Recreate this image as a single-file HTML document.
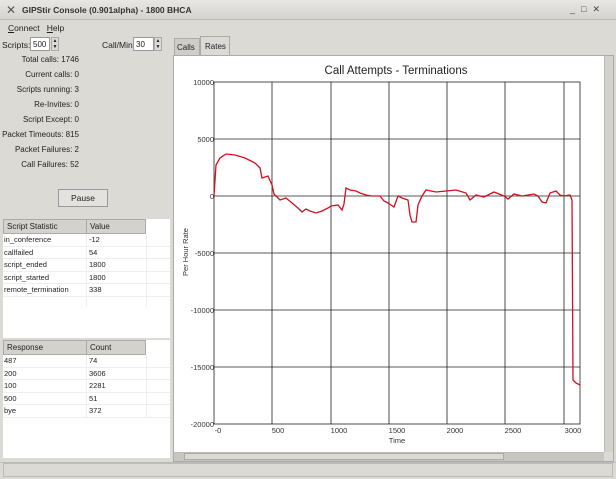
<!DOCTYPE html>
<html><head><style>
*{margin:0;padding:0;box-sizing:border-box}
body{width:616px;height:479px;background:#dcdad5;font-family:"Liberation Sans",sans-serif;font-size:8px;color:#222;position:relative;overflow:hidden}
.a{position:absolute}
.lbl{position:absolute;right:537px;text-align:right;white-space:nowrap;font-size:8px}
.spin{position:absolute;background:#fff;border:1px solid #999;height:14px;font-size:8px;padding:2px}
.tbl{position:absolute;background:#fff}
.hd{position:absolute;background:#d4d2cc;border:1px solid #aaa;height:15px;font-size:8px;padding:2px 3px}
.row{position:absolute;left:0;width:167px;height:12.5px;border-bottom:1px solid #eee;font-size:7.5px}
.row span{position:absolute;top:1px}
</style></head><body>
<div class="a" style="left:0;top:0;width:616px;height:20px;background:linear-gradient(#e8e7e3,#d6d4cf);border-bottom:1px solid #bbb"></div>
<div class="a" style="left:6px;top:3px;font-size:12px;color:#555">✕</div>
<div class="a" style="left:22px;top:5px;font-size:8.5px;font-weight:bold;color:#333">GIPStir Console (0.901alpha) - 1800 BHCA</div>
<div class="a" style="left:570px;top:4px;font-size:9px;color:#444;letter-spacing:6px">_□✕</div>
<div class="a" style="left:8px;top:23px;font-size:8.5px"><u>C</u>onnect&nbsp;&nbsp;&nbsp;<u>H</u>elp</div>
<div class="a" style="left:2px;top:40px;font-size:8.5px">Scripts:</div>
<div class="spin" style="left:30px;top:37px;width:20px">500</div>
<div class="a" style="left:51px;top:37px;width:8px;height:14px;border:1px solid #aaa;font-size:5px;line-height:6px;text-align:center">▲<br>▼</div>
<div class="a" style="left:102px;top:40px;font-size:8.5px">Call/Min:</div>
<div class="spin" style="left:133px;top:37px;width:21px">30</div>
<div class="a" style="left:154px;top:37px;width:8px;height:14px;border:1px solid #aaa;font-size:5px;line-height:6px;text-align:center">▲<br>▼</div>
<div class="lbl" style="top:55px">Total calls: 1746</div>
<div class="lbl" style="top:70px">Current calls: 0</div>
<div class="lbl" style="top:85px">Scripts running: 3</div>
<div class="lbl" style="top:100px">Re-Invites: 0</div>
<div class="lbl" style="top:115px">Script Except: 0</div>
<div class="lbl" style="top:130px">Packet Timeouts: 815</div>
<div class="lbl" style="top:145px">Packet Failures: 2</div>
<div class="lbl" style="top:160px">Call Failures: 52</div>
<div class="a" style="left:58px;top:189px;width:50px;height:18px;border:1px solid #999;background:#e4e2de;text-align:center;line-height:16px;font-size:8.5px">Pause</div>
<div class="tbl" style="left:3px;top:219px;width:167px;height:119px">
<div class="hd" style="left:0;top:0;width:84px">Script Statistic</div>
<div class="hd" style="left:83px;top:0;width:60px">Value</div>
<div class="a" style="left:83px;top:15px;width:1px;height:73px;background:#eee"></div>
<div class="a" style="left:143px;top:15px;width:1px;height:73px;background:#eee"></div>
<div class="row" style="top:15px"><span style="left:1px">in_conference</span><span style="left:86px">-12</span></div>
<div class="row" style="top:27.5px"><span style="left:1px">callfailed</span><span style="left:86px">54</span></div>
<div class="row" style="top:40px"><span style="left:1px">script_ended</span><span style="left:86px">1800</span></div>
<div class="row" style="top:52.5px"><span style="left:1px">script_started</span><span style="left:86px">1800</span></div>
<div class="row" style="top:65px"><span style="left:1px">remote_termination</span><span style="left:86px">338</span></div>
</div>
<div class="tbl" style="left:3px;top:340px;width:167px;height:118px">
<div class="hd" style="left:0;top:0;width:84px">Response</div>
<div class="hd" style="left:83px;top:0;width:60px">Count</div>
<div class="a" style="left:83px;top:15px;width:1px;height:63px;background:#eee"></div>
<div class="a" style="left:143px;top:15px;width:1px;height:63px;background:#eee"></div>
<div class="row" style="top:15px"><span style="left:1px">487</span><span style="left:86px">74</span></div>
<div class="row" style="top:27.5px"><span style="left:1px">200</span><span style="left:86px">3606</span></div>
<div class="row" style="top:40px"><span style="left:1px">100</span><span style="left:86px">2281</span></div>
<div class="row" style="top:52.5px"><span style="left:1px">500</span><span style="left:86px">51</span></div>
<div class="row" style="top:65px"><span style="left:1px">bye</span><span style="left:86px">372</span></div>
</div>
<div class="a" style="left:174px;top:38px;width:26px;height:18px;border:1px solid #aaa;background:#cfcdc8;font-size:8px;padding:4px 2px">Calls</div>
<div class="a" style="left:200px;top:36px;width:30px;height:20px;border:1px solid #aaa;border-bottom:none;background:#dcdad5;font-size:8px;padding:5px 4px">Rates</div>
<div class="a" style="left:173px;top:55px;width:441px;height:407px;border:1px solid #aaa;background:#dcdad5"></div>
<div class="a" style="left:174px;top:56px;width:430px;height:396px;background:#fff"></div>
<div class="a" style="left:604px;top:56px;width:9px;height:396px;background:#d4d2cc;border-left:1px solid #bbb"></div>
<div class="a" style="left:174px;top:452px;width:430px;height:9px;background:#c8c6c1;border-top:1px solid #bbb"></div>
<div class="a" style="left:184px;top:453px;width:320px;height:7px;background:#dcdad5;border:1px solid #aaa"></div>
<div class="a" style="left:0;top:462px;width:616px;height:17px;border-top:1px solid #bbb;background:#dcdad5"></div>
<div class="a" style="left:3px;top:463px;width:610px;height:14px;border:1px solid #bbb"></div>
<svg class="a" style="left:0;top:0" width="616" height="479" font-family="Liberation Sans,sans-serif">
<text x="396" y="74" font-size="11.5" text-anchor="middle" fill="#222">Call Attempts - Terminations</text>
<g stroke="#222" stroke-width="0.8" fill="none">
<rect x="214" y="82" width="366" height="342"/>
<path d="M272 82V424M331 82V424M389 82V424M447 82V424M505 82V424M564 82V424M214 139H580M214 196H580M214 253H580M214 310H580M214 367H580"/>
</g>
<g font-size="7.5" fill="#333" text-anchor="end">
<text x="214" y="85">10000</text><text x="214" y="142">5000</text><text x="214" y="199">0</text>
<text x="214" y="256">-5000</text><text x="214" y="313">-10000</text><text x="214" y="370">-15000</text><text x="214" y="427">-20000</text>
</g>
<g font-size="7.5" fill="#333" text-anchor="middle">
<text x="218" y="433">-0</text><text x="278" y="433">500</text><text x="339" y="433">1000</text><text x="397" y="433">1500</text>
<text x="455" y="433">2000</text><text x="513" y="433">2500</text><text x="573" y="433">3000</text>
<text x="397" y="443">Time</text>
</g>
<text transform="translate(188,252) rotate(-90)" font-size="7.5" fill="#333" text-anchor="middle">Per Hour Rate</text>
<polyline fill="none" stroke="#d01020" stroke-width="1.3" points="214,196 216,165 220,158 226,154 235,155 245,158 255,163 260,168 262,178 268,176 272,185 274,194 280,200 286,198 292,203 298,208 302,212 306,209 310,211 316,213 322,211 328,208 331,206 338,205 342,210 344,204 346,188 350,190 356,191 360,193 366,195 372,196 380,196 384,201 388,203 394,207 398,196 402,198 408,200 410,215 412,222 416,222 418,205 422,196 426,190 436,192 446,191 456,190 466,193 470,200 476,195 484,197 494,192 504,196 508,199 514,194 522,196 534,194 538,196 542,202 546,203 550,193 556,191 560,195 564,196 570,195 572,200 573,380 576,383 580,385"/>
</svg>
</body></html>
